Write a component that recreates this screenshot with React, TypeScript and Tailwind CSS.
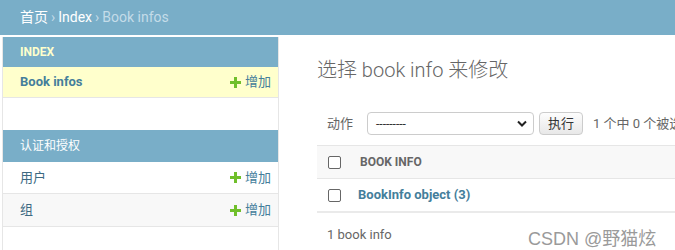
import React from "react";

const Plus = () => (
  <svg width="11" height="11" viewBox="0 0 11 11" className="shrink-0">
    <rect x="4" y="0" width="3" height="11" fill="#70bf2b" />
    <rect x="0" y="4" width="11" height="3" fill="#70bf2b" />
  </svg>
);

const AddLink = () => (
  <span className="flex items-center gap-[4px] text-[13px] text-[#447e9b]">
    <Plus />
    <span>增加</span>
  </span>
);

export default function App() {
  return (
    <div
      className="w-[675px] h-[250px] overflow-hidden bg-white relative"
      style={{ fontFamily: 'Roboto, "Noto Sans CJK SC", sans-serif' }}
    >
      {/* breadcrumb */}
      <div className="h-[35px] bg-[#79aec8] flex items-center pl-[20px] text-[14px] text-white">
        <span>首页</span>
        <span className="mx-[3px] text-[#c4dce8]">›</span>
        <span>Index</span>
        <span className="mx-[3px] text-[#c4dce8]">›</span>
        <span className="text-[#c4dce8]">Book infos</span>
      </div>

      <div className="flex">
        {/* sidebar */}
        <div className="ml-[2px] mt-[2px] w-[277px] h-[220px] border-x border-[#e6e6e6] shrink-0">
          <div className="h-[30px] bg-[#79aec8] flex items-center pl-[17px] text-[12px] font-bold text-[#ffffcc]">
            INDEX
          </div>
          <div className="h-[31px] bg-[#ffffcc] border-b border-[#e6e6e6] flex items-center justify-between pl-[17px] pr-[7px]">
            <span className="text-[13px] font-bold text-[#447e9b]">Book infos</span>
            <AddLink />
          </div>
          <div className="h-[32px]" />
          <div className="h-[32px] bg-[#79aec8] flex items-center pl-[17px] text-[12px] text-white">
            认证和授权
          </div>
          <div className="h-[32px] border-b border-[#e6e6e6] flex items-center justify-between pl-[17px] pr-[7px]">
            <span className="text-[13px] text-[#3d6a82]">用户</span>
            <AddLink />
          </div>
          <div className="h-[33px] bg-[#f8f8f8] border-b border-[#e6e6e6] flex items-center justify-between pl-[17px] pr-[7px]">
            <span className="text-[13px] text-[#3d6a82]">组</span>
            <AddLink />
          </div>
        </div>

        {/* main */}
        <div className="flex-1 pl-[38px] pt-[22px] relative">
          <h1 className="text-[20px] font-light text-[#666] leading-[26px] whitespace-nowrap">
            选择 book info 来修改
          </h1>
          <div className="mt-[29px] flex items-center pl-[10px] h-[23px] text-[13px] text-[#666] whitespace-nowrap">
            <span>动作</span>
            <div className="ml-[14px] w-[167px] h-[23px] border border-[#ccc] rounded-[4px] flex items-center justify-between pl-[8px] pr-[6px] text-[#333]">
              <span className="text-[12px] leading-none">---------</span>
              <svg width="10" height="7" viewBox="0 0 10 7">
                <path d="M1 1.5 L5 5.5 L9 1.5" fill="none" stroke="#222" strokeWidth="2" />
              </svg>
            </div>
            <div className="ml-[5px] w-[44px] h-[23px] border border-[#ccc] rounded-[4px] bg-gradient-to-b from-[#fdfdfd] to-[#e8e8e8] flex items-center justify-center text-[#333]">
              执行
            </div>
            <span className="ml-[10px]">1 个中 0 个被选</span>
          </div>

          <div className="mt-[10px] w-[400px]">
            <div className="h-[34px] bg-[#f8f8f8] border-y border-[#e6e6e6] flex items-center pl-[11px]">
              <span className="w-[13px] h-[13px] border border-[#666] rounded-[2px] bg-white" />
              <span className="ml-[19px] text-[12px] font-bold text-[#666]">BOOK INFO</span>
            </div>
            <div className="h-[34px] border-b-2 border-[#eaeaea] flex items-center pl-[11px]">
              <span className="w-[13px] h-[13px] border border-[#666] rounded-[2px] bg-white" />
              <span className="ml-[17px] text-[13px] font-bold text-[#447e9b]">BookInfo object (3)</span>
            </div>
            <div className="h-[44px] flex items-center pl-[10px] text-[13px] text-[#666]">1 book info</div>
          </div>

          <div className="absolute left-[249px] top-[191px] text-[18px] text-[#9a9a9a] whitespace-nowrap" style={{ fontFamily: '"Liberation Sans", "Noto Sans CJK SC", sans-serif' }}>
            CSDN @野猫炫
          </div>
        </div>
      </div>
    </div>
  );
}
